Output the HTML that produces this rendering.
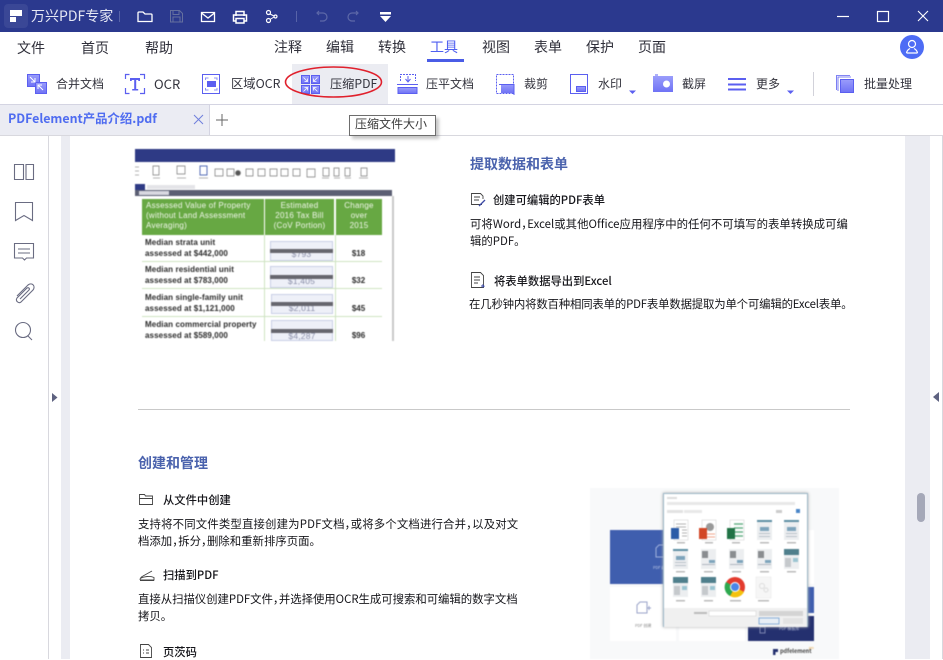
<!DOCTYPE html>
<html lang="zh"><head><meta charset="utf-8"><style>
*{box-sizing:border-box;margin:0;padding:0}
html,body{width:943px;height:659px;overflow:hidden;background:#fff;font-family:"Noto Sans CJK SC","Liberation Sans",sans-serif;color:#33333d}
.a,.t{position:absolute}
.t{white-space:nowrap;line-height:1}
svg{position:absolute;overflow:visible}
.m{font-size:14px;color:#2f2f3a}
.b{font-size:12px;color:#33333d}
.p{font-size:11.4px;color:#15151a}
.h{font-size:11.3px;color:#15151a;font-weight:500}
.s{font-size:14px;color:#4a62ad;font-weight:700}
.c{text-align:center}
.q{display:inline-block;width:6px}
.hd{color:#f2f8ec;font-size:8px;line-height:10px;padding:2px 0;letter-spacing:.25px;background:#67a843;height:36px;top:50px}
.lb{left:10px;color:#2b2b2b;font-size:8px;line-height:10.500px;font-weight:700;white-space:nowrap;letter-spacing:.1px}
.vb{background:#eef0f8;border:1px solid #c9cfe6;font-size:8.500px;color:#8a8ea8;letter-spacing:.2px}
.bar{background:#66666e;height:4px}
.ch{left:200px;width:47px;font-size:8px;font-weight:700;color:#2b2b2b}
</style></head><body>
<!-- title bar -->
<div class="a" style="left:0;top:0;width:943px;height:32px;background:#2b398e"></div>
<div class="a" style="left:4px;top:4px;width:24px;height:24px;background:#3a4796;border-radius:4px"></div>
<svg style="left:0;top:0" width="943" height="32" fill="none" stroke="#fff">
<path d="M10 10H22V16H10Z" fill="#fff" stroke="none"/><path d="M10 17H16V22H10Z" fill="#fff" stroke="none"/>
<path d="M119.500 11V22" stroke="#5763a8"/>
<path d="M138 13a1 1 0 0 1 1-1h4l2 2h6a1 1 0 0 1 1 1v6.500h-14Z" stroke-width="1.300"/>
<g stroke="#65709f"><path d="M170.500 10.500h9l3 3v8.500h-12Z"/><path d="M173 10.500v4h6v-4M173 22v-5h7v5"/></g>
<path d="M201.500 12.500h13v9h-13ZM201.500 13l6.500 5 6.500-5" stroke-width="1.300"/>
<path d="M236 16v-4.500h8V16M236 21h-2.500v-6h13v6H244M236 18.500h8V23h-8Z" stroke-width="1.500"/>
<circle cx="268.500" cy="12.500" r="2" stroke-width="1.200"/><circle cx="268.500" cy="20.500" r="2" stroke-width="1.200"/><circle cx="275.500" cy="16.500" r="1.500" stroke-width="1.200"/><path d="M270 14l4 2M270 19.500l4-2.500"/>
<path d="M296.500 11V22" stroke="#5763a8"/>
<g stroke="#5d68a8" stroke-width="1.200"><path d="M318 13h5a4 4 0 0 1 0 8h-3M319 11l-2 2 2 2"/><path d="M357 13h-5a4 4 0 0 0 0 8h3M356 11l2 2-2 2"/></g>
<path d="M380 12h11v2.500h-11ZM380 16h11l-5.500 6Z" fill="#fff" stroke="none"/>
<path d="M837 16.500h12" stroke-width="1.200"/><rect x="877.500" y="11.500" width="11" height="10" stroke-width="1.200"/><path d="M918 11l10 10M928 11l-10 10" stroke-width="1.100"/>
</svg>
<div class="t" style="left:31px;top:9px;font-size:14px;color:#e6e8f4">万兴PDF专家</div>
<!-- menu -->
<div class="t m" style="left:17px;top:41px">文件</div><div class="t m" style="left:81px;top:41px">首页</div><div class="t m" style="left:145px;top:41px">帮助</div>
<div class="t m" style="left:274px;top:40px">注释</div><div class="t m" style="left:326px;top:40px">编辑</div><div class="t m" style="left:378px;top:40px">转换</div><div class="t m" style="left:430px;top:40px;color:#4f5ff0">工具</div>
<div class="t m" style="left:482px;top:40px">视图</div><div class="t m" style="left:534px;top:40px">表单</div><div class="t m" style="left:586px;top:40px">保护</div><div class="t m" style="left:638px;top:40px">页面</div>
<div class="a" style="left:427px;top:59px;width:37px;height:3px;background:#4a5ce6"></div>
<div class="a" style="left:900px;top:35px;width:24px;height:24px;border-radius:50%;background:#4d6cf5"></div>
<svg style="left:900px;top:35px" width="24" height="24" fill="none" stroke="#fff" stroke-width="1.200"><circle cx="12" cy="9" r="3.500"/><path d="M6.500 18c.5-3 2.500-4 3.500-4.500M17.500 18c-.5-3-2.500-4-3.500-4.500M6.500 18h11"/></svg>
<!-- toolbar -->
<div class="a" style="left:292px;top:64px;width:96px;height:40px;background:#ebecf2"></div>
<div class="t b" style="left:56px;top:78px">合并文档</div><div class="t b" style="left:154px;top:77px;font-size:13px">OCR</div><div class="t b" style="left:231px;top:77px;font-size:12.300px">区域OCR</div><div class="t b" style="left:330px;top:77px;font-size:12.200px">压缩PDF</div><div class="t b" style="left:426px;top:78px">压平文档</div><div class="t b" style="left:524px;top:78px">裁剪</div><div class="t b" style="left:598px;top:78px">水印</div><div class="t b" style="left:682px;top:78px">截屏</div><div class="t b" style="left:756px;top:78px">更多</div><div class="t b" style="left:864px;top:78px">批量处理</div>
<svg style="left:0;top:0" width="943" height="110" fill="none">
<defs><linearGradient id="g" x1="0" y1="0" x2="0" y2="1"><stop offset="0" stop-color="#9a9dfb"/><stop offset="1" stop-color="#6f72f5"/></linearGradient></defs>
<rect x="27.500" y="74.500" width="12" height="12" fill="url(#g)" stroke="#5b5ff0"/><rect x="35.500" y="82.500" width="11" height="11" fill="url(#g)" stroke="#5b5ff0"/><path d="M30 77l5 5M35 78v4h-4M43 90l-5-5M38 89v-4h4" stroke="#fff"/>
<g stroke="#5b5ff0" stroke-width="1.200"><path d="M125.500 79v-4.500h4M140 74.500h4.500V79M125.500 88v5.500h4M140 93.500h4.500V88"/></g><path d="M130 78h10v3h-1.500l-.5-1h-1.800v9h2v1.500h-6V89h2v-9H132l-.5 1H130Z" fill="#5b5ff0"/>
<rect x="202.500" y="74.500" width="17" height="19" stroke="#5b5ff0"/><rect x="207" y="81" width="9" height="6" fill="#5b5ff0"/><path d="M205.500 80v-2h3M214 78h3v2M205.500 88v2h3M214 90h3v-2" stroke="#8d90f8"/>
<g fill="url(#g)" stroke="#5b5ff0"><rect x="301.500" y="75.500" width="8" height="8"/><rect x="311.500" y="75.500" width="8" height="8"/><rect x="301.500" y="85.500" width="8" height="8"/><rect x="311.500" y="85.500" width="8" height="8"/></g>
<path d="M303.500 77.500l4 4M307.500 78.500v3h-3M317.500 77.500l-4 4M313.500 78.500v3h3M303.500 91.500l4-4M304.500 87.500h3v3M317.500 91.500l-4-4M313.500 90.500v-3h3" stroke="#fff" stroke-width=".8"/>
<ellipse cx="333.500" cy="82" rx="48" ry="15" stroke="#e0202c" stroke-width="1.600"/>
<path d="M400.500 81V74.500h15V81" stroke="#5b5ff0" stroke-dasharray="2 1"/><path d="M408 76v5M405.500 79l2.500 3 2.500-3" stroke="#5b5ff0"/><path d="M397 84.500h21" stroke="#5b5ff0"/><rect x="398" y="87.500" width="19" height="6" fill="url(#g)" stroke="#5b5ff0"/>
<rect x="496.500" y="74.500" width="17" height="19" stroke="#5b5ff0" stroke-dasharray="2 1"/><rect x="501" y="84" width="13" height="9" fill="url(#g)"/><path d="M499 84.500h15V95" stroke="#5b5ff0"/>
<rect x="570.500" y="74.500" width="17" height="19" stroke="#5b5ff0"/><rect x="576.500" y="86.500" width="9" height="5" fill="url(#g)" stroke="#5b5ff0"/>
<path d="M629 90.500h7l-3.500 3.500Z" fill="#5b5ff0"/>
<rect x="653" y="76" width="20" height="16" fill="url(#g)"/><path d="M655 75h3" stroke="#5b5ff0"/><circle cx="666.500" cy="84" r="3.500" fill="#fff"/>
<path d="M728 79h18M728 84.500h18M728 89.500h18" stroke="#5b5ff0" stroke-width="2"/>
<path d="M787 90.500h7l-3.500 3.500Z" fill="#5b5ff0"/>
<path d="M813.500 72v24" stroke="#d2d2da"/>
<path d="M836.500 90V75.500H850M838 91V77h13" stroke="#5b5ff0" stroke-width=".8"/><rect x="840.500" y="79.500" width="13" height="13" fill="url(#g)" stroke="#5b5ff0"/>
</svg>
<div class="a" style="left:0;top:104px;width:943px;height:1px;background:#d4d4e2"></div>
<!-- tab -->
<div class="a" style="left:0;top:105px;width:210px;height:30px;background:#ebecf3;border-right:1px solid #d4d4e2"></div>
<div class="t" style="left:8px;top:112px;font-size:12.400px;font-weight:700;color:#4f6cf0">PDFelement产品介绍.pdf</div>
<svg style="left:0;top:105px" width="240" height="30" fill="none"><path d="M194 10l9 9M203 10l-9 9" stroke="#6f7fdc"/><path d="M222 9v12M216 15h12" stroke="#666" /></svg>
<div class="a" style="left:0;top:135px;width:943px;height:1px;background:#d8d8de"></div>
<!-- sidebar and gutters -->
<div class="a" style="left:48px;top:136px;width:1px;height:523px;background:#d8d8de"></div>
<div class="a" style="left:61px;top:136px;width:9px;height:523px;background:#ebecf2"></div>
<div class="a" style="left:905px;top:136px;width:25px;height:523px;background:#ebecf2"></div>
<div class="a" style="left:942px;top:136px;width:1px;height:523px;background:#d8d8de"></div>
<div class="a" style="left:917px;top:493px;width:8px;height:29px;border-radius:4px;background:#a5a8b8"></div>
<svg style="left:0;top:136px" width="943" height="270" fill="none" stroke="#6a6c82" stroke-width="1.100">
<path d="M14.500 28.500h9v15h-9ZM26 28.500h7.500v15H26Z"/>
<path d="M15.500 66.500h17v18l-8.500-5-8.500 5Z"/>
<path d="M14.500 107.500h19V122h-7l-2 2-2-2h-8ZM18 113h12M18 117h12"/>
<path d="M17 160l11-11c4-3 8 1 5 5l-12 12c-2 2-6-1-4-4l10-10c2-1 3 1 2 2l-9 9"/>
<circle cx="23" cy="194" r="7.500"/><path d="M28 200l4 4"/>
<path d="M52 257l5.500 4.500-5.500 4.500Z" fill="#5e6280" stroke="none"/><path d="M939 256l-6 5 6 5Z" fill="#5e6280" stroke="none"/>
</svg>
<!-- table screenshot -->
<div class="a" style="left:135px;top:149px;width:260px;height:192px;overflow:hidden;background:#fff;filter:blur(.45px);font-family:'Liberation Sans',sans-serif">
<div class="a" style="left:0;top:0;width:260px;height:13px;background:#2e3a85"></div>
<div class="a" style="left:0;top:35px;width:10px;height:6px;background:#2e3a85"></div>
<div class="a" style="left:12px;top:36px;width:48px;height:4px;background:#e4e4e8"></div>
<div class="a" style="left:0;top:41px;width:257px;height:6px;background:#5b5f73"></div>
<div class="a" style="left:4px;top:42px;width:30px;height:4px;background:#d8d8e0"></div>
<svg style="left:0;top:0" width="260" height="50" fill="none" stroke="#777" stroke-width=".7">
<path d="M18 17h6v9h-6ZM42 17h8v8h-8ZM65 17h7v9h-7Z"/>
<path d="M65 17h7v9h-7Z" stroke="#3d5cc0"/>
<path d="M80 20h8v7h-8ZM92 20h7v7h-7ZM111 20h7v7h-7ZM123 20h7v7h-7ZM135 20h7v7h-7ZM146 20h7v7h-7ZM158 20h7v7h-7ZM172 20h8v8h-8ZM188 19h6v8h-6ZM199 19h5v8h-5ZM210 19h5v8h-5ZM226 19h6v8h-6Z"/>
<path d="M18 29h7M42 29h9M64 29h9M187 29h7M199 29h6M210 29h6M224 29h9" stroke="#999"/>
<circle cx="103" cy="24" r="2.500" fill="#555"/>
<path d="M0 18h4M0 22h4M0 26h4" stroke="#999"/>
</svg>
<div class="a" style="left:257px;top:47px;width:2px;height:145px;background:#c9c9c9"></div>
<div class="a hd" style="left:7px;width:122px;padding-left:4px;white-space:nowrap">Assessed Value of Property<br>(without Land Assessment<br>Averaging)</div>
<div class="a c hd" style="left:130px;width:69px;white-space:nowrap">Estimated<br>2016 Tax Bill<br>(CoV Portion)</div>
<div class="a c hd" style="left:201px;width:46px">Change<br>over<br>2015</div>
<div class="a" style="left:7px;top:112px;width:240px;height:1px;background:#cfe3c2"></div><div class="a" style="left:7px;top:139px;width:240px;height:1px;background:#cfe3c2"></div><div class="a" style="left:7px;top:167px;width:240px;height:1px;background:#cfe3c2"></div>
<div class="a" style="left:129px;top:86px;width:1px;height:106px;background:#cfe3c2"></div><div class="a" style="left:200px;top:86px;width:1px;height:106px;background:#cfe3c2"></div>
<div class="a lb" style="top:89px">Median strata unit<br>assessed at $442,000</div>
<div class="a lb" style="top:116px">Median residential unit<br>assessed at $783,000</div>
<div class="a lb" style="top:144px">Median single-family unit<br>assessed at $1,121,000</div>
<div class="a lb" style="top:171px">Median commercial property<br>assessed at $589,000</div>
<div class="a c vb" style="left:135px;top:92px;width:63px;height:20px;line-height:25px">$793</div>
<div class="a c vb" style="left:135px;top:117px;width:63px;height:22px;line-height:28px">$1,405</div>
<div class="a c vb" style="left:136px;top:145px;width:62px;height:20px;line-height:27px">$2,011</div>
<div class="a c vb" style="left:136px;top:171px;width:62px;height:21px;line-height:30px">$4,287</div>
<div class="a bar" style="left:135px;top:100px;width:63px"></div><div class="a bar" style="left:135px;top:126px;width:63px"></div><div class="a bar" style="left:136px;top:153px;width:62px"></div><div class="a bar" style="left:136px;top:180px;width:62px"></div>
<div class="a c ch" style="top:100px">$18</div><div class="a c ch" style="top:127px">$32</div><div class="a c ch" style="top:155px">$45</div><div class="a c ch" style="top:182px">$96</div>
</div>
<!-- right text -->
<div class="t s" style="left:470px;top:157px">提取数据和表单</div>
<svg style="left:0;top:0" width="943" height="659" fill="none" stroke="#444" stroke-width=".9">
<path d="M482 204.500h-10.500v-11h9l2.500 2.500v3M474 197h6M474 200h5"/><path d="M479 206l6-6" stroke="#3c4aa5" stroke-width="1.300"/>
<path d="M471.500 272.500h9l3 3v12h-12ZM474 277h6M474 280h6M474 283h4"/><path d="M481 286h3l-1.500-1.500M484 286l-1.500 1.500" stroke="#3c4aa5"/>
<path d="M139.500 504.500v-10h5l1 1.500h7v8.500ZM139.500 498.500h13"/>
<path d="M140 580c0-2 1-3 3-4l9-5M140 580h14v-2.500c-4-2-10-1-14 1M140 580.500h14"/>
<path d="M140.500 644.500h8l3 3v10h-11ZM143 650h1M146 650h3M143 653h1M146 653h3"/>
</svg>
<div class="t h" style="left:493px;top:195px">创建可编辑的PDF表单</div>
<div class="t p" style="left:470px;top:219px;letter-spacing:.03px">可将Word<span class="q">，</span>Excel或其他Office应用程序中的任何不可填写的表单转换成可编</div>
<div class="t p" style="left:470px;top:236px">辑的PDF。</div>
<div class="t h" style="left:494px;top:276px">将表单数据导出到Excel</div>
<div class="t p" style="left:469px;top:299px;letter-spacing:-.17px">在几秒钟内将数百种相同表单的PDF表单数据提取为单个可编辑的Excel表单。</div>
<div class="a" style="left:138px;top:409px;width:712px;height:1px;background:#c9c9c9"></div>
<!-- left lower text -->
<div class="t s" style="left:138px;top:456px">创建和管理</div>
<div class="t h" style="left:163px;top:495px">从文件中创建</div>
<div class="t p" style="left:138px;top:519px;letter-spacing:.16px">支持将不同文件类型直接创建为PDF文档<span class="q">，</span>或将多个文档进行合并<span class="q">，</span>以及对文</div>
<div class="t p" style="left:138px;top:536px">档添加<span class="q">，</span>拆分<span class="q">，</span>删除和重新排序页面。</div>
<div class="t h" style="left:163px;top:570px">扫描到PDF</div>
<div class="t p" style="left:138px;top:594px;letter-spacing:-.03px">直接从扫描仪创建PDF文件<span class="q">，</span>并选择使用OCR生成可搜索和可编辑的数字文档</div>
<div class="t p" style="left:138px;top:611px">拷贝。</div>
<div class="t h" style="left:163px;top:647px">页茨码</div>
<!-- collage -->
<div class="a" style="left:590px;top:488px;width:249px;height:171px;background:#f8f9fa;overflow:hidden;filter:blur(.45px)">
<div class="a" style="left:20px;top:42px;width:190px;height:54px;background:#3f5eae"></div>
<div class="a" style="left:20px;top:99px;width:66px;height:54px;background:#fff"></div>
<div class="a" style="left:89px;top:99px;width:66px;height:54px;background:#fff"></div>
<div class="a" style="left:158px;top:99px;width:66px;height:26px;background:#3f5eae"></div>
<div class="a" style="left:158px;top:128px;width:66px;height:25px;background:#24306f"></div>
<div class="a" style="left:209px;top:42px;width:15px;height:54px;background:#fff"></div>
<svg style="left:0;top:0" width="249" height="171" fill="none">
<path d="M66 69v-9l3-3h6v12Z" stroke="#9fb0dc"/><path d="M47 125v-8l3-3h7v11Z" stroke="#9aa3c8"/><path d="M57 120h4M59 118v4" stroke="#9aa3c8"/>
<rect x="170" y="139" width="5" height="6" stroke="#7a84b0"/>
<path d="M183 161h5v3h-2.500v3H183Z" fill="#24306f"/>
</svg>
<div class="t" style="left:63px;top:78px;font-size:4px;color:#c0cce8">PDF 编</div>
<div class="t" style="left:45px;top:136px;font-size:4px;color:#888">PDF 创建</div>
<div class="t" style="left:189px;top:139px;font-size:4px;color:#b5bedb">PDF 模板库</div>
<div class="t" style="left:190px;top:161px;font-size:5.500px;font-weight:700;color:#444">pdfelement</div>
<div class="t" style="left:219px;top:159px;font-size:3px;color:#e8a33a">pro</div>
<div class="a" style="left:73px;top:5px;width:145px;height:134px;background:#fff;border:1px solid #9cb7c7;box-shadow:0 0 3px #aaa">
<svg style="left:0;top:0" width="143" height="132">
<defs>
<symbol id="ta" width="15" height="20"><rect width="15" height="20" fill="#eceef0"/><rect width="15" height="2" fill="#5d8ea3"/><rect x="3" y="7" width="9" height="4" fill="#7ea4bc"/><rect x="2" y="13" width="11" height="1" fill="#b9c2c9"/><rect x="2" y="16" width="11" height="1" fill="#b9c2c9"/></symbol>
<symbol id="tb" width="15" height="20"><rect width="15" height="20" fill="#eceef0"/><rect x="1" y="2" width="6" height="7" fill="#8a8d90"/><rect x="8" y="11" width="6" height="3" fill="#7ea4bc"/><rect x="1" y="15" width="13" height="1" fill="#b0b8c0"/></symbol>
<symbol id="tc" width="15" height="20"><rect width="15" height="20" fill="#eceef0"/><rect width="15" height="6" fill="#4f7f8c"/><rect x="9" y="9" width="5" height="4" fill="#9cc5d2"/><rect x="1" y="9" width="6" height="9" fill="#c5c9cc"/></symbol>
</defs>
<rect x="3" y="8" width="128" height="3" fill="#e8e8e8"/>
<rect x="3" y="3" width="10" height="2" fill="#ddd"/>
<rect x="3" y="16" width="16" height="3" fill="#e2e2e2"/><rect x="20" y="16" width="18" height="3" fill="#e8e8e8"/>
<rect x="112" y="16" width="6" height="3" fill="#ccc"/><rect x="132" y="15" width="4" height="4" fill="#4a86c8"/>
<g fill="#fff" stroke="#ccc" stroke-width=".5"><rect x="10" y="26" width="14" height="20"/><rect x="38" y="26" width="14" height="20"/><rect x="66" y="26" width="14" height="20"/></g>
<path d="M12 30h10M12 33h10M18 36h5M18 39h5M18 42h5" stroke="#999" stroke-width=".8"/>
<circle cx="46" cy="33" r="4" fill="#999"/><path d="M43 40h8M43 43h8" stroke="#f0a48c"/>
<path d="M70 30h9M70 34h9M70 38h9M70 42h9" stroke="#67b088" stroke-width="1.500"/>
<rect x="7" y="34" width="8" height="11" fill="#2b5ca8"/><rect x="35" y="34" width="8" height="11" fill="#d24726"/><rect x="63" y="34" width="8" height="11" fill="#217346"/>
<use href="#ta" x="93" y="26"/><use href="#ta" x="120" y="26"/>
<use href="#ta" x="9" y="55"/><use href="#tb" x="37" y="55"/><use href="#tb" x="65" y="55"/><use href="#tb" x="93" y="55"/><use href="#tc" x="120" y="55"/>
<use href="#tc" x="9" y="83"/><use href="#tc" x="37" y="83"/>
<rect x="92" y="83" width="15" height="21" fill="#f6f6f6" stroke="#e6e6e6" stroke-width=".5"/><circle cx="98" cy="92" r="2.500" fill="none" stroke="#ddd"/><circle cx="102" cy="96" r="2" fill="none" stroke="#ddd"/>
<g fill="#bbb"><rect x="13" y="48" width="8" height="1.500"/><rect x="41" y="48" width="8" height="1.500"/><rect x="68" y="48" width="8" height="1.500"/><rect x="96" y="48" width="9" height="1.500"/><rect x="123" y="48" width="9" height="1.500"/><rect x="12" y="77" width="9" height="1.500"/><rect x="40" y="77" width="9" height="1.500"/><rect x="68" y="77" width="9" height="1.500"/><rect x="96" y="77" width="9" height="1.500"/><rect x="123" y="77" width="9" height="1.500"/><rect x="12" y="106" width="9" height="1.500"/><rect x="40" y="106" width="9" height="1.500"/><rect x="66" y="106" width="11" height="1.500"/><rect x="94" y="106" width="11" height="1.500"/></g>
<circle cx="71" cy="93" r="10" fill="#e33b2e"/><path d="M71 93L80 98A10 10 0 0 1 66 102Z" fill="#f4c20d"/><path d="M71 93L66 102A10 10 0 0 1 62 88Z" fill="#2da94f"/><circle cx="71" cy="93" r="4.500" fill="#4a86e8" stroke="#fff"/>
<rect x="0" y="114" width="143" height="19" fill="#f0f0f0"/><rect x="45" y="117" width="47" height="5" fill="#fff" stroke="#ccc" stroke-width=".5"/><rect x="95" y="117" width="44" height="5" fill="#d4d4d4"/><rect x="95" y="124" width="20" height="6" fill="#e8eef5" stroke="#4a86c8" stroke-width=".6"/><rect x="119" y="124" width="20" height="6" fill="#e3e3e3"/><rect x="30" y="118" width="13" height="2" fill="#bbb"/>
</svg></div>
</div>
<!-- tooltip -->
<div class="a" style="left:349px;top:115px;width:87px;height:21px;background:#fff;border:1px solid #6d6d6d;box-shadow:3px 3px 3px rgba(0,0,0,.22)"></div>
<div class="t" style="left:355px;top:118px;font-size:12px;color:#3c3c3c">压缩文件大小</div>
</body></html>
